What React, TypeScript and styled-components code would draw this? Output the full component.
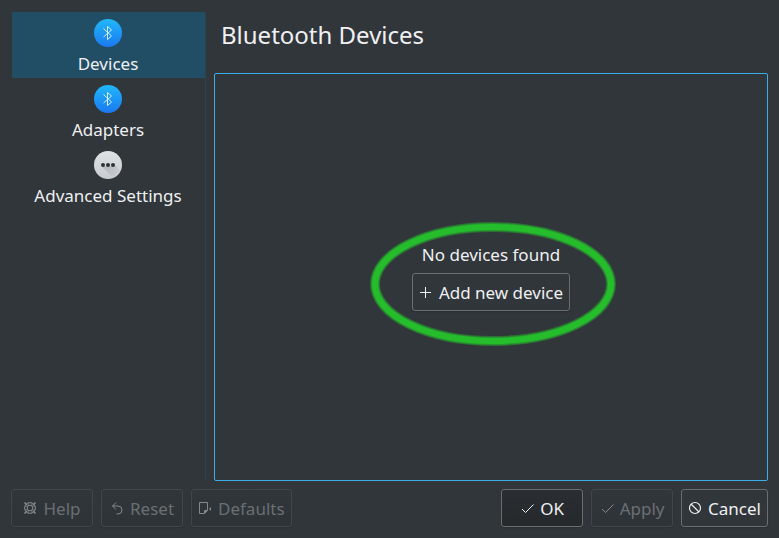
import React from "react";
import styled, { createGlobalStyle } from "styled-components";

const GlobalStyle = createGlobalStyle`
  * { box-sizing: border-box; }
  body {
    margin: 0;
    background: #31363b;
    color: #eff0f1;
    font: 17px/24px "Noto Sans", sans-serif;
  }
`;

const Window = styled.div`
  display: flex;
  flex-direction: column;
  gap: 8px;
  min-height: 100vh;
  padding: 12px 11px 11px;
`;

const Body = styled.div`
  display: flex;
  flex: 1;
  gap: 8px;
  padding-left: 1px;
`;

const Sidebar = styled.nav`
  flex: 0 0 194px;
  border-right: 1px solid #2a4351;
`;

const NavItem = styled.button<{ $selected?: boolean }>`
  display: flex;
  flex-direction: column;
  align-items: center;
  gap: 5px;
  width: 100%;
  height: 66px;
  margin: 0;
  padding: 7px 1px 0 0;
  border: 0;
  background: ${(p) => (p.$selected ? "#224e65" : "transparent")};
  color: inherit;
  font: inherit;
  white-space: nowrap;
`;

const Content = styled.main`
  display: flex;
  flex: 1;
  flex-direction: column;
`;

const Title = styled.h1`
  margin: 0;
  padding: 6px 7px 21px;
  font-size: 24px;
  line-height: 34px;
  font-weight: 400;
`;

const DevicePanel = styled.section`
  display: flex;
  flex: 1;
  align-items: center;
  justify-content: center;
  border: 1px solid #3daee9;
  border-radius: 2px;
`;

const EmptyState = styled.div`
  position: relative;
  display: flex;
  flex-direction: column;
  align-items: center;
  gap: 6px;
`;

const Message = styled.p`
  margin: 0;
`;

const Highlight = styled.svg`
  position: absolute;
  top: -22px;
  left: -42px;
  pointer-events: none;
`;

const Button = styled.button<{ $primary?: boolean }>`
  display: flex;
  align-items: center;
  justify-content: center;
  gap: 6px;
  min-width: 82px;
  height: 38px;
  padding: 2px 6px 0;
  border: 1px solid #6a6e71;
  border-radius: 3px;
  background: ${(p) => (p.$primary ? "linear-gradient(#2a2e32, #25292c)" : "#31363b")};
  box-shadow: 0 1px 1px #2b3034;
  color: inherit;
  font: inherit;
  white-space: nowrap;

  &:disabled {
    border-color: #42474b;
    background: linear-gradient(#31363a, #2e3337);
    color: #6b6f73;
  }
  &:disabled svg {
    color: #85898c;
  }
`;

const Footer = styled.footer`
  display: flex;
  justify-content: space-between;
`;

const ButtonGroup = styled.div`
  display: flex;
  gap: 8px;
`;

const Glyph = styled.svg`
  flex: none;
  width: 14px;
  height: 14px;
  margin-bottom: 2px;
  fill: none;
  stroke: currentColor;
`;

function BluetoothIcon({ id }: { id: string }) {
  return (
    <svg width="28" height="28" viewBox="0 0 28 28" aria-hidden="true">
      <defs>
        <linearGradient id={id} x1="0" y1="0" x2="0" y2="1">
          <stop offset="0" stopColor="#20b8fb" />
          <stop offset="1" stopColor="#1b78f0" />
        </linearGradient>
      </defs>
      <circle cx="14" cy="14" r="14" fill={`url(#${id})`} />
      <path d="M9.5 9.5 17.5 17 13.5 20.5V7.5L17.5 11 9.5 18" fill="none" stroke="#d5edff" strokeWidth="1" />
    </svg>
  );
}

function MoreIcon() {
  return (
    <svg width="28" height="28" viewBox="0 0 28 28" aria-hidden="true">
      <defs>
        <linearGradient id="more-fill" x1="0" y1="0" x2="0" y2="1">
          <stop offset="0" stopColor="#e0e3e5" />
          <stop offset="1" stopColor="#c8ccd0" />
        </linearGradient>
        <linearGradient id="more-shade" x1="0" y1="0" x2="1" y2="1">
          <stop offset="0" stopColor="#31363b" stopOpacity="0.22" />
          <stop offset="1" stopColor="#31363b" stopOpacity="0" />
        </linearGradient>
      </defs>
      <circle cx="14" cy="14" r="14" fill="url(#more-fill)" />
      <path d="M7.6 15.4 19 26.5 26 20 20.4 12.6 18 15 15 15z" fill="url(#more-shade)" />
      <g fill="#2e3338">
        <circle cx="9" cy="14" r="2" />
        <circle cx="14" cy="14" r="2" />
        <circle cx="19" cy="14" r="2" />
      </g>
    </svg>
  );
}

const PlusIcon = () => (
  <Glyph viewBox="0 0 14 14" aria-hidden="true"><path d="M1 7.5H12M6.5 2V13" /></Glyph>
);

const HelpIcon = () => (
  <Glyph viewBox="0 0 14 14" aria-hidden="true">
    <circle cx="7" cy="7" r="5.4" />
    <circle cx="7" cy="7" r="2.8" />
    <path d="M5.2 1.8V5M8.8 1.8V5M5.2 9V12.2M8.8 9V12.2M1.8 5.2H5M1.8 8.8H5M9 5.2H12.2M9 8.8H12.2" strokeWidth="0.7" />
    <path d="M1.5 1.5 4 4M12.5 1.5 10 4M1.5 12.5 4 10M12.5 12.5 10 10" strokeWidth="1.6" />
  </Glyph>
);

const ResetIcon = () => (
  <Glyph viewBox="0 0 14 14" aria-hidden="true">
    <path d="M6 1.5 2.5 5 6 8.5M2.5 5H8A4 4 0 0 1 8 13H6.5" />
  </Glyph>
);

const DefaultsIcon = () => (
  <Glyph viewBox="0 0 14 14" aria-hidden="true">
    <path d="M6.5 12.5H1.5V1.5H9.5V9.5L6.5 12.5V9.5H9.5" />
    <path d="M6.5 9.5H9.5L6.5 12.5zM11 8 13 6V10z" fill="currentColor" stroke="none" />
  </Glyph>
);

const CheckIcon = () => (
  <Glyph viewBox="0 0 14 14" aria-hidden="true"><path d="M2 8 5.5 11.5 13.5 3.5" /></Glyph>
);

const CancelIcon = () => (
  <Glyph viewBox="0 0 14 14" aria-hidden="true">
    <circle cx="7" cy="7" r="5.5" strokeWidth="1.2" />
    <path d="M3 3 11 11" strokeWidth="1.2" />
  </Glyph>
);

const ring = { cx: 123, cy: 63, rx: 118, ry: 57 };

export default function App() {
  return (
    <Window>
      <GlobalStyle />
      <Body>
        <Sidebar>
          <NavItem $selected aria-current="page"><BluetoothIcon id="bt-devices" />Devices</NavItem>
          <NavItem><BluetoothIcon id="bt-adapters" />Adapters</NavItem>
          <NavItem><MoreIcon />Advanced Settings</NavItem>
        </Sidebar>
        <Content>
          <Title>Bluetooth Devices</Title>
          <DevicePanel>
            <EmptyState>
              <Message>No devices found</Message>
              <Button><PlusIcon />Add new device</Button>
              <Highlight width="246" height="126" viewBox="0 0 246 126" aria-hidden="true">
                <g fill="none" stroke="#25bd2c">
                  <ellipse {...ring} strokeOpacity="0.4" strokeWidth="10" />
                  <ellipse {...ring} strokeOpacity="0.5" strokeWidth="8" />
                  <ellipse {...ring} strokeWidth="6" />
                </g>
              </Highlight>
            </EmptyState>
          </DevicePanel>
        </Content>
      </Body>
      <Footer>
        <ButtonGroup>
          <Button disabled><HelpIcon />Help</Button>
          <Button disabled><ResetIcon />Reset</Button>
          <Button disabled><DefaultsIcon />Defaults</Button>
        </ButtonGroup>
        <ButtonGroup>
          <Button $primary><CheckIcon />OK</Button>
          <Button disabled><CheckIcon />Apply</Button>
          <Button><CancelIcon />Cancel</Button>
        </ButtonGroup>
      </Footer>
    </Window>
  );
}
